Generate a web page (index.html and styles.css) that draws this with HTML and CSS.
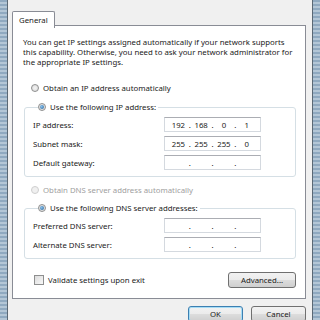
FILE: index.html
```html
<!DOCTYPE html>
<html lang="en">
<head>
  <meta charset="UTF-8" />
  <title>Internet Protocol Version 4 (TCP/IPv4) Properties</title>
  <link rel="stylesheet" href="styles.css">
</head>
<body>
  <div class="window">
    <div class="frame"></div>
    <div class="dialog">
      <div class="tabs">
        <span class="tab">General</span>
      </div>

      <div class="panel">
        <p class="intro">You can get IP settings assigned automatically if your network supports this capability. Otherwise, you need to ask your network administrator for the appropriate IP settings.</p>

        <label class="option first"><span class="radio"></span>Obtain an IP address automatically</label>

        <fieldset class="group">
          <legend><label class="option"><span class="radio checked"></span>Use the following IP address:</label></legend>
          <div class="row">
            <span>IP address:</span>
            <div class="ip"><span>192</span><i>.</i><span>168</span><i>.</i><span>0</span><i>.</i><span>1</span></div>
          </div>
          <div class="row">
            <span>Subnet mask:</span>
            <div class="ip"><span>255</span><i>.</i><span>255</span><i>.</i><span>255</span><i>.</i><span>0</span></div>
          </div>
          <div class="row">
            <span>Default gateway:</span>
            <div class="ip"><span></span><i>.</i><span></span><i>.</i><span></span><i>.</i><span></span></div>
          </div>
        </fieldset>

        <label class="option disabled"><span class="radio"></span>Obtain DNS server address automatically</label>

        <fieldset class="group">
          <legend><label class="option"><span class="radio checked"></span>Use the following DNS server addresses:</label></legend>
          <div class="row">
            <span>Preferred DNS server:</span>
            <div class="ip"><span></span><i>.</i><span></span><i>.</i><span></span><i>.</i><span></span></div>
          </div>
          <div class="row">
            <span>Alternate DNS server:</span>
            <div class="ip"><span></span><i>.</i><span></span><i>.</i><span></span><i>.</i><span></span></div>
          </div>
        </fieldset>

        <div class="bottom-row">
          <label class="check"><span class="box"></span>Validate settings upon exit</label>
          <button class="btn advanced">Advanced...</button>
        </div>
      </div>

      <div class="actions">
        <button class="btn default">OK</button>
        <button class="btn">Cancel</button>
      </div>
    </div>
    <div class="frame right"></div>
  </div>
</body>
</html>
```

FILE: styles.css
```css
html, body {
  margin: 0;
  padding: 0;
}
body {
  width: 320px;
  height: 320px;
  overflow: hidden;
  font-family: 'Noto Sans', sans-serif;
  font-size: 7.8px;
  line-height: 10px;
  color: #1a1a1a;
}
.window {
  display: flex;
  height: 320px;
}
.frame {
  width: 7px;
  border-right: 1px solid #5a6874;
  background: repeating-linear-gradient(180deg, #8fa9c0 0, #8fa9c0 2px, #b3c6d6 2px, #b3c6d6 4px);
}
.frame.right {
  border-right: none;
  border-left: 1px solid #5a6874;
}
.dialog {
  flex: 1;
  background: #f0f0f0;
  padding: 11px 6px 0 4px;
  display: flex;
  flex-direction: column;
}
.tabs {
  display: flex;
  height: 15px;
  position: relative;
  z-index: 1;
}
.tab {
  background: #fff;
  border: 1px solid #898c95;
  border-bottom: none;
  border-radius: 2px 2px 0 0;
  padding: 3px 7px 0 6px;
  width: 28px;
  height: 13px;
}
.panel {
  background: #fff;
  border: 1px solid #898c95;
  padding: 11px 9px 10px 10px;
  margin-top: -1px;
}
.intro {
  margin: 0;
}
.option {
  display: flex;
  align-items: center;
  gap: 4px;
  white-space: nowrap;
}
.option.first {
  margin: 16px 0 9px 8px;
}
.option.disabled {
  color: #a0a0a0;
  margin: 8px 0 8px 8px;
}
.radio {
  width: 6px;
  height: 6px;
  border: 1px solid #8e8f8f;
  border-radius: 50%;
  background: radial-gradient(circle, #f4f4f4 0, #d8d8d8 100%);
  display: inline-flex;
  align-items: center;
  justify-content: center;
}
.option.disabled .radio {
  border-color: #cfcfcf;
  background: #f0f0f0;
}
.radio.checked::after {
  content: "";
  width: 4px;
  height: 4px;
  border-radius: 50%;
  background: radial-gradient(circle at 40% 40%, #8ac3ef 0, #1f5d95 100%);
}
.group {
  margin: 0 0 0 1px;
  border: 1px solid #d5dfe5;
  border-radius: 3px;
  padding: 5px 34px 6px 8px;
}
.group legend {
  padding: 0 2px 0 0;
  margin-left: 5px;
}
.row {
  display: flex;
  align-items: center;
  justify-content: space-between;
  height: 15px;
  margin-bottom: 4px;
}
.row:last-child {
  margin-bottom: 0;
}
.ip {
  height: 13px;
  border: 1px solid #d4d9df;
  border-top-color: #abadb3;
  display: flex;
  align-items: center;
  padding: 0 4px;
  width: 87px;
}
.ip span {
  flex: 1;
  text-align: center;
}
.ip i {
  font-style: normal;
  width: 4px;
  text-align: center;
}
.bottom-row {
  display: flex;
  align-items: center;
  justify-content: space-between;
  margin-top: 13px;
  padding-left: 11px;
}
.check {
  display: flex;
  align-items: center;
  gap: 4px;
}
.box {
  width: 8px;
  height: 8px;
  border: 1px solid #8e8f8f;
  background: linear-gradient(135deg, #dcdcdc, #f8f8f8);
}
.btn {
  font-family: inherit;
  font-size: 7.8px;
  line-height: 10px;
  color: #1a1a1a;
  border: 1px solid #707070;
  border-radius: 3px;
  background: linear-gradient(180deg, #f2f2f2 0, #ebebeb 50%, #dddddd 50%, #cfcfcf 100%);
  padding: 0;
  height: 16px;
}
.advanced {
  width: 68px;
}
.actions {
  display: flex;
  justify-content: flex-end;
  gap: 8px;
  margin-top: 7px;
}
.actions .btn {
  width: 55px;
}
.btn.default {
  border-color: #3c7fb1;
  box-shadow: inset 0 0 0 1px #a6dcf5;
}
```
